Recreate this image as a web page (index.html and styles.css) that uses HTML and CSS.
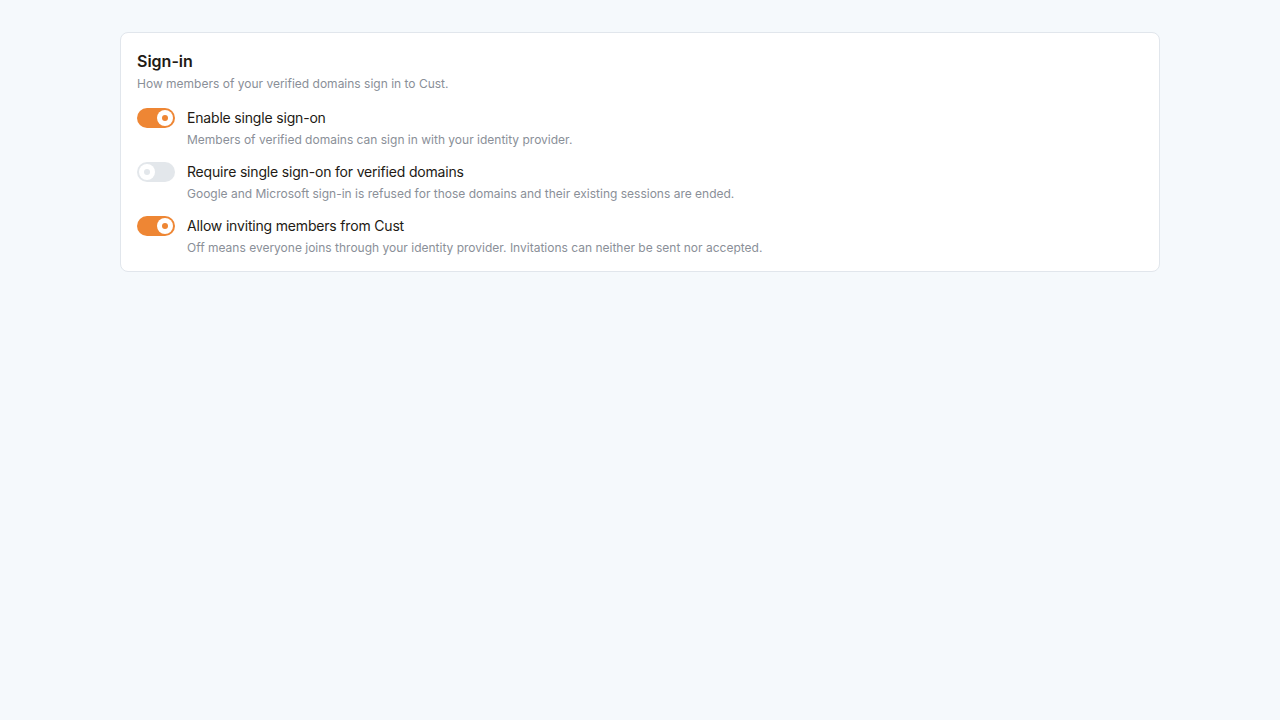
FILE: index.html
```html
<!DOCTYPE html>
<html lang="en">
<head>
<meta charset="utf-8">
<title>Sign-in</title>
<link rel="stylesheet" href="styles.css">
</head>
<body>
<main class="page">
  <section class="card">
    <h2 class="card-title">Sign-in</h2>
    <p class="card-sub">How members of your verified domains sign in to Cust.</p>
    <div class="rows">
      <div class="row">
        <span class="toggle on"><span class="thumb"></span></span>
        <div class="row-text">
          <div class="row-label">Enable single sign-on</div>
          <div class="row-desc">Members of verified domains can sign in with your identity provider.</div>
        </div>
      </div>
      <div class="row">
        <span class="toggle"><span class="thumb"></span></span>
        <div class="row-text">
          <div class="row-label">Require single sign-on for verified domains</div>
          <div class="row-desc">Google and Microsoft sign-in is refused for those domains and their existing sessions are ended.</div>
        </div>
      </div>
      <div class="row">
        <span class="toggle on"><span class="thumb"></span></span>
        <div class="row-text">
          <div class="row-label">Allow inviting members from Cust</div>
          <div class="row-desc">Off means everyone joins through your identity provider. Invitations can neither be sent nor accepted.</div>
        </div>
      </div>
    </div>
  </section>
</main>
</body>
</html>
```
FILE: styles.css
```css
* { box-sizing: border-box; }
html, body { margin: 0; padding: 0; }
body {
  background: #f5f9fc;
  font-family: Inter, "Noto Sans", "Liberation Sans", sans-serif;
  color: #221a14;
}
.page {
  padding: 32px 120px;
}
.card {
  background: #ffffff;
  border: 1px solid #e1e6ec;
  border-radius: 8px;
  padding: 16px 16px 15px;
}
.card-title {
  margin: 0;
  font-size: 16px;
  line-height: 24px;
  font-weight: 600;
  color: #221a14;
}
.card-sub {
  margin: 3px 0 0;
  font-size: 12px;
  line-height: 16px;
  color: #8a8f98;
}
.rows {
  margin-top: 16px;
  display: flex;
  flex-direction: column;
  gap: 14px;
}
.row {
  display: flex;
  align-items: flex-start;
  gap: 12px;
}
.toggle {
  flex: none;
  position: relative;
  width: 38px;
  height: 20px;
  border-radius: 10px;
  background: #e3e7eb;
  display: block;
}
.toggle.on { background: #ee8634; }
.thumb {
  position: absolute;
  top: 2px;
  left: 2px;
  width: 16px;
  height: 16px;
  border-radius: 50%;
  background: #ffffff;
}
.thumb::after {
  content: "";
  position: absolute;
  left: 5px;
  top: 5px;
  width: 6px;
  height: 6px;
  border-radius: 50%;
  background: #e3e7eb;
}
.toggle.on .thumb { left: 20px; }
.toggle.on .thumb::after { background: #ee8634; }
.row-label {
  font-size: 14px;
  line-height: 20px;
  letter-spacing: -0.18px;
  color: #221a14;
}
.row-desc {
  margin-top: 4px;
  font-size: 12px;
  line-height: 16px;
  color: #8a8f98;
}
```
